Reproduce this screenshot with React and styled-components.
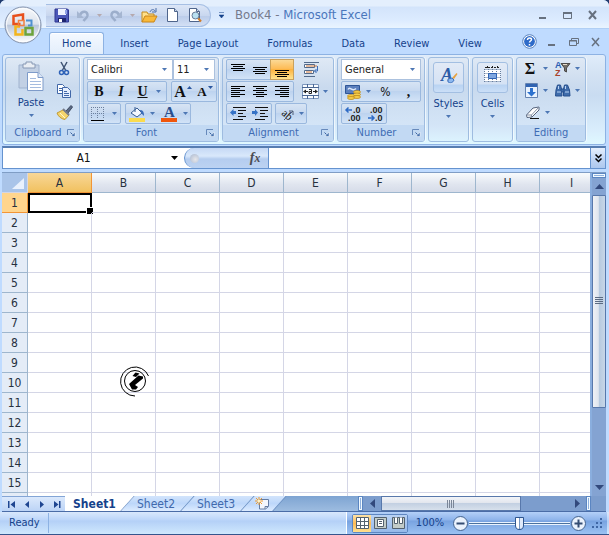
import React, { Fragment } from 'react';
import styled, { createGlobalStyle, css } from 'styled-components';

const GlobalStyle = createGlobalStyle`
  * {
    box-sizing: border-box;
  }

  body {
    margin: 0;
    background: #1f3a6e;
    color: #15428b;
    font: 12px/16px 'DejaVu Sans Condensed', 'Noto Sans', sans-serif;
  }

  button,
  input,
  select {
    margin: 0;
    padding: 0;
    border: 0;
    background: none;
    color: inherit;
    font: inherit;
    outline: none;
  }

  svg {
    display: block;
    flex: none;
  }
`;

const Window = styled.div`
  position: relative;
  display: flex;
  flex-direction: column;
  height: 100vh;
  min-height: 400px;
  overflow: hidden;
  border-radius: 6px 6px 0 0;
  background: #bfdbff;
`;

/* title bar */

const TitleBar = styled.header`
  display: flex;
  align-items: center;
  height: 29px;
  padding: 2px 4px 0 46px;
  border-bottom: 1px solid #b0cff5;
  background: linear-gradient(#e4effd 0, #e4effd 6px, #d3e4fb 7px, #dcebff 20px, #e9f4ff);
`;

const QuickAccess = styled.div`
  display: flex;
  align-items: center;
  width: 165px;
  height: 23px;
  padding-left: 7px;
  border: 1px solid #a6bfe4;
  border-left: 0;
  border-radius: 0 12px 12px 0;
  background: linear-gradient(#dce6f7, #c9d7ef 50%, #bccdea 55%, #d3e0f5);
`;

const IconButton = styled.button`
  display: flex;
  align-items: center;
  justify-content: center;
  flex: none;
  width: ${(props) => props.$w || 22}px;
  height: ${(props) => props.$h || 20}px;
`;

const Title = styled.h1`
  flex: 1;
  margin: 0;
  padding-left: 4px;
  font-size: 13px;
  font-weight: 400;
  white-space: nowrap;
  color: #4a76bb;

  & span {
    color: #757a8c;
  }
`;

const OfficeButton = styled.button`
  position: absolute;
  z-index: 2;
  left: 4px;
  top: 6px;
  width: 38px;
  height: 38px;
`;

/* ribbon */

const TabStrip = styled.nav`
  display: flex;
  align-items: flex-end;
  gap: 3px;
  height: 25px;
  padding: 0 3px 0 49px;
`;

const RibbonTab = styled.button`
  height: 22px;
  padding: 0 12px;
  border: 1px solid transparent;
  border-bottom: 0;
  border-radius: 3px 3px 0 0;
  font-size: 11px;
  white-space: nowrap;

  ${(props) =>
    props.$active &&
    css`
      border-color: #8db2e3;
      background: linear-gradient(#f4f9ff, #e3eefb);
      box-shadow: inset 0 1px #fff;
    `}
`;

const TabTools = styled.div`
  display: flex;
  align-items: center;
  height: 25px;
  margin-left: auto;
`;

const Ribbon = styled.section`
  display: flex;
  gap: 3px;
  height: 91px;
  margin: 0 3px 0 2px;
  padding: 2px;
  border: 1px solid #8db2e3;
  border-radius: 3px;
  background: linear-gradient(#e0ecfa, #d3e2f3 20px, #c9dcf1 40px, #d9edfc 75px, #dff8ff);
`;

const Group = styled.div`
  display: flex;
  flex-direction: column;
  flex: none;
  width: ${(props) => props.$w}px;
  height: 85px;
  border: 1px solid #9ebce0;
  border-radius: 3px;
  overflow: hidden;
  background: linear-gradient(#dfe9f5, #d4e1f1 15px, #c9daee 30px, #d4e5f7 68px, #dcf3fe);
  box-shadow: 1px 0 rgba(255, 255, 255, 0.6);
`;

const GroupBody = styled.div`
  display: flex;
  flex: 1;
  flex-direction: column;
  gap: 1px;
  padding: 1px 3px 0;
`;

const GroupLabel = styled.div`
  display: flex;
  align-items: center;
  height: 16px;
  padding: 0 3px;
  background: #c2d9f3;
  color: #3f6cb3;
  font-size: 11px;

  & span {
    flex: 1;
    text-align: center;
  }
`;

const ToolRow = styled.div`
  display: flex;
  gap: ${(props) => props.$gap || 0}px;
  height: 21px;
`;

const ButtonSet = styled.div`
  display: flex;
  border: 1px solid ${(props) => (props.$bare ? 'transparent' : '#9ab8de')};
  border-radius: 2px;
  background: ${(props) =>
    props.$bare ? 'none' : 'linear-gradient(#d7e4f4, #c7d9f0 45%, #bdd3ef 50%, #d2e3f7)'};
`;

const Tool = styled.button`
  display: flex;
  align-items: center;
  justify-content: center;
  gap: ${(props) => props.$gap || 4}px;
  width: ${(props) => props.$w || 22}px;
  height: 19px;
  color: #111;

  & + & {
    border-left: ${(props) => (props.$plain ? '0' : '1px solid #b9cfeb')};
  }

  ${(props) =>
    props.$active &&
    css`
      background: linear-gradient(#fbd996, #fdbc57 45%, #fcb341 50%, #ffe48f);
      box-shadow: 0 0 0 1px #c9a15c;
    `}
`;

const Letter = styled.span`
  font-family: 'Liberation Serif', serif;
  font-size: ${(props) => props.$size || 14}px;
  font-weight: ${(props) => props.$weight || 700};
  font-style: ${(props) => (props.$italic ? 'italic' : 'normal')};
  text-decoration: ${(props) => (props.$underline ? 'underline' : 'none')};
`;

const SelectBox = styled.label`
  position: relative;
  display: block;
  width: ${(props) => props.$w}px;
  height: 21px;
  border: 1px solid #abc1de;
  background: #fff;
  color: #222;

  & select {
    width: 100%;
    height: 19px;
    padding-left: 3px;
    appearance: none;
    font-size: 11px;
  }

  & svg {
    position: absolute;
    right: 5px;
    top: 8px;
    pointer-events: none;
  }
`;

const ClipboardTools = styled.div`
  display: flex;
  flex: 1;
`;

const BigButton = styled.button`
  display: flex;
  flex-direction: column;
  align-items: center;
  gap: 3px;
  width: ${(props) => props.$w}px;
  padding-top: 2px;
  font-size: 11px;
`;

const CollapsedButton = styled(BigButton)`
  flex: 1;
  width: 100%;
  justify-content: flex-start;
  padding-top: 4px;
`;

const IconPlate = styled.span`
  display: flex;
  justify-content: center;
  width: 31px;
  height: 31px;
  padding-top: 3px;
  border: 1px solid #a3bfe2;
  border-radius: 3px;
  background: linear-gradient(#e2eaf6 0, #d5e2f4 21px, #b9d3f2 22px, #cbdff7);
`;

const Column = styled.div`
  display: flex;
  flex-direction: column;
  gap: 3px;
`;

/* formula bar */

const FormulaBar = styled.div`
  display: flex;
  height: 23px;
  flex: none;
  margin: 1px 3px 3px 2px;
  border: 1px solid #6593cf;
  border-top: 2px solid #567db1;
  background: #fff;
  color: #111;
`;

const NameBox = styled.div`
  display: flex;
  width: 181px;

  & input {
    flex: 1;
    min-width: 0;
    text-align: center;
  }
`;

const FunctionPill = styled.div`
  display: flex;
  align-items: center;
  justify-content: space-between;
  width: 85px;
  padding: 0 5px;
  border-left: 1px solid #6593cf;
  border-right: 1px solid #6593cf;
  border-radius: 10px 0 0 10px;
  background: linear-gradient(#c6d9f5, #d9e8fb 40%, #b5cdef 55%, #bcd2f2);
`;

const Knob = styled.span`
  width: 9px;
  height: 9px;
  border-radius: 50%;
  background: radial-gradient(circle at 60% 60%, #e6e6ea, #a9b8d0);
`;

const FunctionButton = styled(IconButton)`
  color: #4c4c52;
`;

const FormulaInput = styled.input`
  flex: 1;
  min-width: 0;
  padding: 0 4px;
`;

const ExpandButton = styled(IconButton)`
  height: 20px;
  border-left: 1px solid #6593cf;
  background: linear-gradient(#e6f0fd, #c3d8f6 50%, #adc8ee);
`;

/* sheet */

const SheetArea = styled.main`
  position: relative;
  display: flex;
  flex: 1;
  min-height: 0;
  margin: 0 3px 0 2px;
  border-top: 1px solid #7f9dc5;
`;

const GridView = styled.div`
  position: relative;
  flex: 1;
  min-width: 0;
  overflow: hidden;
  background: #fff;
`;

const Grid = styled.table`
  width: 0;
  table-layout: fixed;
  border-collapse: separate;
  border-spacing: 0;

  & col {
    width: 64px;
  }

  & col:first-child {
    width: 26px;
  }

  & th,
  & td {
    height: 20px;
    padding: 0;
    border-right: 1px solid #d4d6e6;
    border-bottom: 1px solid #d4d6e6;
    font-weight: 400;
    line-height: 18px;
  }
`;

const Corner = styled.th`
  background: #a9c4e9;

  & svg {
    margin: 2px 0 0 9px;
  }
`;

const HeaderCell = styled.th`
  color: #27313f;
  background: ${(props) => (props.scope === 'col' ? 'linear-gradient(#f8fbfd, #e0e5ef 60%, #d6dce9)' : '#e4ecf7')};

  && {
    border-color: #9eb6ce;
  }

  ${(props) =>
    props.$active &&
    css`
      background: ${props.scope === 'col' ? 'linear-gradient(#f8d798, #f1c15f)' : '#ffd58d'};

      &&& {
        border-color: #f29536;
      }
    `}
`;

const Cell = styled.td`
  position: relative;
`;

const CellCursor = styled.div`
  position: absolute;
  inset: 0 -1px -1px 0;
  border: 2px solid #000;

  &::after {
    content: '';
    position: absolute;
    right: -3px;
    bottom: -3px;
    width: 6px;
    height: 6px;
    border: 1px solid #fff;
    border-right: 0;
    border-bottom: 0;
    background: #000;
  }
`;

const CanvasMark = styled.svg`
  position: absolute;
  left: 115px;
  top: 191px;
`;

const VerticalScroll = styled.div`
  display: flex;
  flex-direction: column;
  width: 16px;
  border-left: 2px solid #8aaede;
  background: #84a3d2;
`;

const SplitHandle = styled.div`
  width: ${(props) => props.$w}px;
  height: ${(props) => props.$h}px;
  flex: none;
  border: 1px solid #5b86c2;
  background: #8fb0dd;
  box-shadow: inset 0 0 0 1px #f2faff;
`;

const VThumb = styled.div`
  display: flex;
  align-items: center;
  justify-content: center;
  flex: 213;
  border: 1px solid #5878ab;
  border-radius: 1px;
  background: linear-gradient(90deg, #eff1f5, #dfe5ee 45%, #b6c9df 50%, #c8d7e8);
`;

const Spacer = styled.div`
  flex: ${(props) => props.$grow || 1};
`;

/* sheet tabs */

const BottomBar = styled.div`
  display: flex;
  flex: none;
  height: 16px;
  margin: 0 3px 0 2px;
  border-bottom: 1px solid #4a6ca6;
  background: linear-gradient(#7ea4d2, #9dbce0);
`;

const SheetNav = styled.div`
  display: flex;
  width: 63px;
  padding-left: 2px;
  border-top: 1px solid #83a5d6;
  background: linear-gradient(#dbe9fc, #bcd4f6);
`;

const SheetTab = styled.button`
  position: relative;
  z-index: 1;
  width: ${(props) => (props.$active ? 63 : 60)}px;
  height: 15px;
  padding-right: 4px;
  color: ${(props) => (props.$active ? '#15428b' : '#4069ac')};
  font-weight: ${(props) => (props.$active ? 700 : 400)};
  line-height: 14px;

  &::before {
    content: '';
    position: absolute;
    z-index: -1;
    inset: 0;
    transform: skewX(-42deg);
    border-right: 1px solid #6f92c4;
    background: ${(props) => (props.$active ? '#fff' : 'linear-gradient(#d2e4fc, #bdd7fa 50%, #dcebff)')};
  }
`;

const SheetTabs = styled.div`
  display: flex;
  isolation: isolate;
  overflow: hidden;
  padding-right: 8px;
  background: linear-gradient(90deg, #fff 40px, transparent 40px);
`;

const NewSheetTab = styled(SheetTab)`
  display: flex;
  align-items: center;
  justify-content: center;
  width: 32px;
`;

const HorizontalScroll = styled.div`
  display: flex;
  flex: none;
  width: 41%;
  margin-left: auto;
  padding-right: 15px;
  background: #7c9dcd;
`;

const HThumb = styled.div`
  display: flex;
  align-items: center;
  justify-content: center;
  flex: 140;
  border: 1px solid #5878ab;
  background: linear-gradient(#f2f4f8, #e2e6ee 45%, #c3d0e2 50%, #d7e0ec);
`;

/* status bar */

const StatusBar = styled.footer`
  display: flex;
  align-items: center;
  flex: none;
  height: 23px;
  padding-right: 2px;
  border-bottom: 1px solid #35558d;
  background: linear-gradient(#d9e8fc, #bbd5f9 8px, #b4d0f7 9px, #cfe8fd);
  font-size: 11px;
`;

const StatusText = styled.div`
  width: 49px;
  padding-left: 9px;
  border-right: 1px solid #8db2e3;
  line-height: 20px;
`;

const StatusTools = styled.div`
  display: flex;
  align-items: center;
  height: 22px;
  margin-left: auto;
  padding-left: 5px;
  border-left: 1px solid #fff;
  background: linear-gradient(#b4d0f8, #8db3ea 8px, #78a3e0 9px, #9bc2f3);
`;

const ViewSwitch = styled.div`
  display: flex;
  border: 1px solid #5e86c0;
  border-radius: 2px;
`;

const ViewButton = styled(IconButton)`
  background: ${(props) =>
    props.$active ? 'linear-gradient(#fde2a8, #fdbb55 50%, #ffe090)' : 'linear-gradient(#b9d2f4, #96b9ea)'};
`;

const ZoomLabel = styled.button`
  width: 44px;
  text-align: center;
`;

const ZoomSlider = styled.input`
  width: 101px;
  height: 16px;
  appearance: none;
  background: linear-gradient(#49719f, #49719f) center / 100% 1px no-repeat,
    linear-gradient(#e9f3ff, #e9f3ff) center / 100% 3px no-repeat;

  &::-webkit-slider-thumb {
    appearance: none;
    width: 9px;
    height: 13px;
    border: 1px solid #2f568f;
    border-radius: 1px 1px 5px 5px;
    background: linear-gradient(90deg, #fff 3px, #7697c4 3px, #7697c4 4px, #dfeafa 4px);
  }
`;

const Arrow = ({ w = 5, color = '#4d77b4' }) => (
  <svg width={w} height={3} viewBox='0 0 5 3'>
    <path d='M0 0h5L2.500 3z' fill={color} />
  </svg>
);

const Lines = ({ widths, top = 2, align = 'left', step = 2 }) => (
  <svg width='16' height='16' shapeRendering='crispEdges'>
    {widths.map((w, i) => {
      const x = align === 'left' ? 1 : align === 'right' ? 15 - w : 8 - w / 2;
      return <rect key={i} x={x} y={top + i * step} width={w} height='1' fill='#000' />;
    })}
  </svg>
);

const Launcher = () => (
  <svg width='9' height='9' viewBox='0 0 9 9' fill='none' stroke='#6689bb'>
    <path d='M.5 6V.5H7' />
    <path d='M3.500 3.500l3 3' stroke='#3a62a0' />
    <path d='M4 7.500h4V3z' fill='#4470ad' stroke='#fff' strokeWidth='.5' />
  </svg>
);

const OfficeLogo = () => (
  <svg width='38' height='38' viewBox='0 0 38 38'>
    <defs>
      <linearGradient id='orb' x2='0' y2='1'>
        <stop offset='0' stopColor='#f7f9fc' />
        <stop offset='.48' stopColor='#dce2ec' />
        <stop offset='.5' stopColor='#b9c6da' />
        <stop offset='1' stopColor='#fff' />
      </linearGradient>
    </defs>
    <circle cx='19' cy='19' r='18' fill='url(#orb)' stroke='#8291ab' />
    <circle cx='19' cy='19' r='16.500' fill='none' stroke='#fff' opacity='.8' />
    <g fill='none' strokeWidth='2.500'>
      <path d='M16.500 18H9.500V10l9.500-1.500V15' stroke='#e8501c' />
      <path d='M22 14.500h5.500v5H24' stroke='#4f91d0' strokeWidth='2' />
      <path d='M16 20.500h-4.500V28.500h7V23' stroke='#f3b51d' />
      <path d='M21.500 22h7v6.500h-7z' stroke='#6da33b' />
      <path d='M14.500 14.500h5.500v5h-5.500z' stroke='#f1803f' strokeWidth='1.500' />
    </g>
  </svg>
);

const SaveIcon = () => (
  <svg width='15' height='15' viewBox='0 0 15 15'>
    <path d='M1 1h12.500l1 1v12H1z' fill='#4c58b8' stroke='#2e3791' />
    <path d='M4 1h8v6H4z' fill='#eef3ff' />
    <path d='M4 10h8v4H4z' fill='#1e256e' />
    <path d='M5 11h3v3H5z' fill='#fff' />
    <path d='M11 2h2v4h-2z' fill='#8fa0e3' />
  </svg>
);

const UndoIcon = ({ flip }) => (
  <svg width='14' height='13' viewBox='0 0 14 13'>
    <g transform={flip ? 'translate(14 0) scale(-1 1)' : undefined}>
      <path d='M4 6C6 1 12 2 11.500 6.500 11 9 9 10 7.500 12' fill='none' stroke='#9caecb' strokeWidth='2.500' />
      <path d='M1 2v7h7z' fill='#a5b6d1' />
    </g>
  </svg>
);

const OpenIcon = () => (
  <svg width='17' height='15' viewBox='0 0 17 15'>
    <path d='M1 14V4h5l1 2h6v3' fill='#ffe08a' stroke='#c28a1e' />
    <path d='M1 14l3-6h12l-3 6z' fill='#f9b93a' stroke='#c9861b' />
    <path d='M9 4c1-3 4-3 5-1m1-3v4h-4' fill='none' stroke='#4d6fa8' />
  </svg>
);

const PageIcon = ({ lens }) => (
  <svg width='15' height='16' viewBox='0 0 15 16'>
    <path d='M2.500 1.500h7l3 3v10h-10z' fill='#fff' stroke='#4f658c' />
    <path d='M9.500 1.500v3h3' fill='#c8d6ea' stroke='#4f658c' />
    {lens && (
      <Fragment>
        <path d='M11 11l3 3.500' stroke='#d07d2b' strokeWidth='2' />
        <circle cx='8.500' cy='8.500' r='3.500' fill='#b9e0f1' stroke='#687b96' />
      </Fragment>
    )}
  </svg>
);

const PasteIcon = () => (
  <svg width='27' height='31' viewBox='0 0 27 31'>
    <path d='M1 4h20v23H1z' fill='#c2d0e4' stroke='#a0b3cf' />
    <path d='M5 3h3V1h6v2h3v4H5z' fill='#e9edf3' stroke='#8798b4' />
    <path d='M9.500 11.500H20l5 5v13H9.500z' fill='#fff' stroke='#7e9bc9' />
    <path d='M20 11.500v5h5' fill='#dce7f6' stroke='#7e9bc9' />
    <path d='M12 17.500h6m-6 3h11m-11 3h11m-11 3h11' stroke='#a5bcdf' />
  </svg>
);

const CutIcon = () => (
  <svg width='12' height='15' viewBox='0 0 12 15' fill='none'>
    <path d='M3 1l5 9M9 1L4 10' stroke='#3f5373' strokeWidth='1.500' />
    <circle cx='3.500' cy='11.500' r='2' stroke='#2e62b8' strokeWidth='1.500' />
    <circle cx='8.500' cy='11.500' r='2' stroke='#2e62b8' strokeWidth='1.500' />
  </svg>
);

const CopyIcon = () => (
  <svg width='16' height='14' viewBox='0 0 16 14' stroke='#4167a8'>
    <path d='M1.500.5h5l2 2v7h-7z' fill='#fff' />
    <path d='M3 4.500h4M3 6.500h4' />
    <path d='M6.500 3.500h5l3 3v7h-8z' fill='#e6efff' />
    <path d='M8 7.500h3m-3 2h5m-5 2h5' />
  </svg>
);

const PainterIcon = () => (
  <svg width='17' height='15' viewBox='0 0 17 15'>
    <path d='M10 6l5-5.500 1.500 1.500L12 8z' fill='#5c6b85' stroke='#3e4960' />
    <path d='M1 8l6-3 6 5-4 4.500C5 14 2 11 1 8z' fill='#f5d56c' stroke='#c09a35' />
    <path d='M7 4l6 6' stroke='#777c8c' strokeWidth='2' />
    <path d='M4 8l5 5' stroke='#fff6cf' />
  </svg>
);

const BorderIcon = () => (
  <svg width='14' height='14' viewBox='0 0 14 14' stroke='#6c7f9c' strokeDasharray='1 1'>
    <path d='M0 .5h13M0 6.500h13M.5 0v12M6.500 0v12M12.500 0v12' fill='none' />
    <path d='M0 13.500h13' stroke='#000' strokeDasharray='none' />
  </svg>
);

const FillIcon = () => (
  <svg width='17' height='16' viewBox='0 0 17 16'>
    <path d='M2 7l6-5 5 5-5 4z' fill='#f4f8ff' stroke='#365c93' />
    <path d='M6 1v5' stroke='#365c93' />
    <path d='M11 4c3 0 4 2 4 6l-3-3z' fill='#3a6cb8' />
    <path d='M0 12h16v4H0z' fill='#fadb4f' />
  </svg>
);

const WrapIcon = () => (
  <svg width='17' height='15' viewBox='0 0 17 15' fill='none'>
    <path d='M1 .5h15M1 14.500h11' stroke='#536a8b' />
    <path d='M1.500 2.500h10v3h-10zM1.500 8.500h9v3h-9z' fill='#fff' stroke='#536a8b' />
    <path d='M3 4h11M3 10h6' stroke='#c9743a' />
    <path d='M14.500 4v5h-3m2-2l-2 2 2 2' stroke='#3b6cba' />
  </svg>
);

const MergeIcon = () => (
  <svg width='17' height='15' viewBox='0 0 17 15'>
    <path d='M.5.5h16v14H.5z' fill='#f8fbff' stroke='#7d97be' />
    <path d='M0 3.500h17M0 11.500h17M5.500 0v3M11.500 0v3M5.500 12v3M11.500 12v3' stroke='#4a6794' />
    <path d='M1 7.500l3-2v4zM16 7.500l-3-2v4zM4 7h2v1H4zM11 7h2v1h-2z' fill='#222' />
    <path d='M7 5.500h2.500v4H7v-2h2.500' fill='none' stroke='#222' />
  </svg>
);

const IndentIcon = ({ right }) => (
  <svg width='17' height='15' viewBox='0 0 17 15'>
    <path d='M3 1.500h13M8 4.500h8M8 7.500h5M8 10.500h8M3 13.500h10' stroke='#111' />
    <path d={right ? 'M6 6.500L3 3v2H0v3h3v2z' : 'M0 6.500L3.500 3v2H6v3H3.500v2z'} fill='#3572c6' />
  </svg>
);

const OrientationIcon = () => (
  <svg width='16' height='15' viewBox='0 0 16 15'>
    <text x='2' y='8' fontFamily='Liberation Serif, serif' fontSize='11' fill='#111' transform='rotate(42 2 8)'>
      ab
    </text>
    <path d='M5 14L14 5m0 4V5h-4' fill='none' stroke='#4f5f79' />
  </svg>
);

const MoneyIcon = () => (
  <svg width='17' height='16' viewBox='0 0 17 16'>
    <path d='M.5 1.500h14v8H.5z' fill='#5b7fbd' stroke='#2e5596' />
    <path d='M3 5.500c2-4 4 3 8-1' stroke='#dce8fa' fill='none' strokeWidth='1.500' />
    <g fill='#f8cf4b' stroke='#b98418' strokeWidth='.7'>
      <ellipse cx='12' cy='8' rx='3.500' ry='1.500' />
      <ellipse cx='12' cy='10.500' rx='3.500' ry='1.500' />
      <ellipse cx='6' cy='12' rx='3.500' ry='1.500' />
      <ellipse cx='12' cy='13' rx='3.500' ry='1.500' />
      <ellipse cx='6' cy='14' rx='3.500' ry='1.500' />
    </g>
  </svg>
);

const DecimalIcon = ({ up }) => (
  <svg width='18' height='16' viewBox='0 0 18 16'>
    <g fontFamily='Liberation Sans, sans-serif' fontSize='9' fontWeight='700' fill='#222'>
      <text x={up ? 9 : 4} y='7'>
        {up ? '.0' : '.00'}
      </text>
      <text x={up ? 4 : 9} y='15'>
        {up ? '.00' : '.0'}
      </text>
    </g>
    <path d={up ? 'M2 4h6M4.500 1.500L2 4l2.500 2.500' : 'M2 12h6M5.500 9.500L8 12l-2.500 2.500'} fill='none' stroke='#2f6cc6' strokeWidth='1.500' />
  </svg>
);

const StylesIcon = () => (
  <svg width='18' height='18' viewBox='0 0 18 18'>
    <text x='1' y='15' fontFamily='Liberation Serif, serif' fontSize='18' fontStyle='italic' fontWeight='700' fill='#2c5ba6'>
      A
    </text>
    <path d='M12 12l4.500-5 1 1-3.500 5z' fill='#e7a23e' />
    <path d='M8 13l4-1 2 2c-1 3-4 3-6 2z' fill='#8db8ee' stroke='#3c73c0' />
  </svg>
);

const CellsIcon = () => (
  <svg width='17' height='17' viewBox='0 0 17 17' fill='none'>
    <path d='M.5 3.500h16v12H.5z' fill='#fff' />
    <path d='M.5 3.500h16M.5 7.500h16M.5 11.500h16M.5 15.500h16M.5 3v13M4.500 3v13M8.500 3v13M12.500 3v13M16.500 3v13' stroke='#647c9f' strokeDasharray='1 1' />
    <path d='M4.500 7.500h8v5h-8z' fill='#7fa7e0' stroke='#2e62b3' />
    <path d='M1 1.500h15M3.500 0v3M8.500 0v3M13.500 0v3' stroke='#222' strokeDasharray='2 1' />
  </svg>
);

const FillDownIcon = () => (
  <svg width='14' height='15' viewBox='0 0 14 15'>
    <path d='M.5.5h12v14H.5z' fill='#e9f3ff' stroke='#6483b2' />
    <path d='M1 1h11v3H1z' fill='#3164b2' />
    <path d='M5 5h3v4h3l-4.500 4.500L2 9h3z' fill='#2d72cf' />
  </svg>
);

const EraserIcon = () => (
  <svg width='16' height='13' viewBox='0 0 16 13'>
    <path d='M1.500 9L8 2l6-1v3L7 11l-5 .5z' fill='#fff' stroke='#56647d' />
    <path d='M1.500 9h5L14 1M6.500 9v2.500' fill='none' stroke='#8390a6' />
    <path d='M5 12.500h9' stroke='#111' />
  </svg>
);

const SortIcon = () => (
  <svg width='17' height='16' viewBox='0 0 17 16'>
    <g fontFamily='Liberation Sans, sans-serif' fontSize='9' fontWeight='700'>
      <text x='1' y='7' fill='#2c60b3'>
        A
      </text>
      <text x='1' y='15' fill='#a9432e'>
        Z
      </text>
    </g>
    <path d='M7 2.500h9L12.500 7v4l-2-1V7z' fill='#74706a' stroke='#4c4b4b' />
    <path d='M9 3.500h4' stroke='#e5dccb' />
  </svg>
);

const FindIcon = () => (
  <svg width='17' height='14' viewBox='0 0 17 14' fill='#3f6cab' stroke='#27508f'>
    <path d='M3.500 1h3l1 4 .5 7H1.500l.5-6zM10.500 1h3l2 5 .5 6H9.500V5z' />
    <path d='M7 5h3v3H7z' />
    <path d='M3 8h4M11 8h4M4.500 2v3M11.500 2v3' stroke='#b9d3f5' />
  </svg>
);

const WindowIcon = ({ kind, big }) => (
  <svg width='11' height='10' viewBox='0 0 11 10' fill='none' stroke='#67717f' strokeWidth='1.500'>
    {kind === 'min' && <path d='M2 8h7' strokeWidth='2' />}
    {kind === 'close' && <path d='M2 1l7 8M9 1L2 9' strokeWidth={big ? 2 : 1.5} />}
    {kind === 'max' && (
      <Fragment>
        <path d='M1.500 2.500h8v6h-8z' strokeWidth='1' />
        <path d='M1 3h9' strokeWidth='2' />
      </Fragment>
    )}
    {kind === 'restore' && (
      <g strokeWidth='1'>
        <path d='M3.500 3V1.500h7v5H9' />
        <path d='M1.500 3.500h7v5h-7zM1 4h8' />
      </g>
    )}
  </svg>
);

const HelpIcon = () => (
  <svg width='15' height='15' viewBox='0 0 15 15'>
    <circle cx='7.500' cy='7.500' r='6.800' fill='#fff' stroke='#5780bc' />
    <circle cx='7.500' cy='7.500' r='5.400' fill='#2e6bc9' />
    <path d='M5.500 6c0-3 4-2.500 4-.5 0 1.500-2 1.500-2 3M7.500 10v1.500' fill='none' stroke='#fff' strokeWidth='1.500' />
  </svg>
);

const NavIcon = ({ d }) => (
  <svg width='8' height='7' viewBox='0 0 8 7'>
    <path d={d} fill='#1f4691' />
  </svg>
);

const NewSheetIcon = () => (
  <svg width='15' height='13' viewBox='0 0 15 13'>
    <path d='M4.500 2.500h9v7l-3 2.500h-6z' fill='#f4f7fd' stroke='#647ca3' />
    <path d='M13 9.500h-3V12' fill='none' stroke='#647ca3' />
    <path d='M4 0v8M0 4h8M1 1l6 6M7 1L1 7' stroke='#ee9a2e' />
    <circle cx='4' cy='4' r='1.500' fill='#fff3c4' />
  </svg>
);

const ViewIcon = ({ kind }) => (
  <svg width='13' height='13' viewBox='0 0 13 13' fill='#fff' stroke='#53616e'>
    <path d='M.5.5h12v11H.5z' fill={kind === 'normal' ? '#fff' : '#c3ccc8'} />
    {kind === 'normal' && <path d='M0 4.500h13M0 8.500h13M4.500 0v12M8.500 0v12' />}
    {kind === 'layout' && <path d='M3.500 2.500h6v7h-6zM5 4.500h3M5 6.500h3' />}
    {kind === 'break' && <path d='M2.500.5v6h3v-6M7.500.5v6h3v-6' />}
  </svg>
);

const ZoomIcon = ({ plus }) => (
  <svg width='17' height='17' viewBox='0 0 17 17'>
    <circle cx='8.500' cy='8.500' r='7' fill='#eaf2fd' stroke='#43638f' />
    <path d='M4.500 8.500h8' stroke='#344d73' strokeWidth='2' />
    {plus && <path d='M8.500 4.500v8' stroke='#344d73' strokeWidth='2' />}
  </svg>
);

const tabs = ['Home', 'Insert', 'Page Layout', 'Formulas', 'Data', 'Review', 'View'];
const columns = 'ABCDEFGHIJKLMNOPQRSTUVWXYZ'.split('');
const rows = Array.from({ length: 40 }, (_, i) => i + 1);

const RibbonGroup = ({ label, width, launcher, children }) => (
  <Group $w={width}>
    <GroupBody>{children}</GroupBody>
    <GroupLabel>
      <span>{label}</span>
      {launcher && <Launcher />}
    </GroupLabel>
  </Group>
);

const Dropdown = ({ label, value, width }) => (
  <SelectBox $w={width}>
    <select aria-label={label} defaultValue={value}>
      <option>{value}</option>
    </select>
    <Arrow />
  </SelectBox>
);

const ClipboardGroup = () => (
  <RibbonGroup label='Clipboard' width={75} launcher>
    <ClipboardTools>
      <BigButton $w={44}>
        <PasteIcon />
        Paste
        <Arrow />
      </BigButton>
      <Column>
        <Tool $plain aria-label='Cut'>
          <CutIcon />
        </Tool>
        <Tool $plain aria-label='Copy'>
          <CopyIcon />
        </Tool>
        <Tool $plain aria-label='Format Painter'>
          <PainterIcon />
        </Tool>
      </Column>
    </ClipboardTools>
  </RibbonGroup>
);

const FontGroup = () => (
  <RibbonGroup label='Font' width={136} launcher>
    <ToolRow>
      <Dropdown label='Font' value='Calibri' width={86} />
      <Dropdown label='Font size' value='11' width={42} />
    </ToolRow>
    <ToolRow $gap={4}>
      <ButtonSet>
        <Tool>
          <Letter>B</Letter>
        </Tool>
        <Tool>
          <Letter $italic>I</Letter>
        </Tool>
        <Tool $w={34} $gap={8}>
          <Letter $underline>U</Letter>
          <Arrow />
        </Tool>
      </ButtonSet>
      <ButtonSet>
        <Tool $gap={1} aria-label='Grow font'>
          <Letter $size={16}>A</Letter>
          <svg width='5' height='12' viewBox='0 0 5 12'>
            <path d='M0 3h5L2.500 0z' fill='#2b57a0' />
          </svg>
        </Tool>
        <Tool $gap={1} aria-label='Shrink font'>
          <Letter $size={13}>A</Letter>
          <svg width='5' height='12' viewBox='0 0 5 12'>
            <path d='M0 0h5L2.500 3z' fill='#2b57a0' />
          </svg>
        </Tool>
      </ButtonSet>
    </ToolRow>
    <ToolRow $gap={4}>
      <ButtonSet>
        <Tool $w={32} $gap={7} aria-label='Borders'>
          <BorderIcon />
          <Arrow />
        </Tool>
      </ButtonSet>
      <ButtonSet>
        <Tool $w={32} aria-label='Fill colour'>
          <FillIcon />
          <Arrow />
        </Tool>
        <Tool $w={32} $gap={6} aria-label='Font colour'>
          <svg width='16' height='16' viewBox='0 0 16 16'>
            <text x='3' y='11' fontFamily='Liberation Serif, serif' fontSize='15' fontWeight='700' fill='#2a4e8c'>
              A
            </text>
            <path d='M0 12h16v4H0z' fill='#f0560c' />
          </svg>
          <Arrow />
        </Tool>
      </ButtonSet>
    </ToolRow>
  </RibbonGroup>
);

const AlignmentGroup = () => (
  <RibbonGroup label='Alignment' width={112} launcher>
    <ToolRow $gap={5}>
      <ButtonSet>
        <Tool aria-label='Top align'>
          <Lines widths={[14, 10, 14, 10]} top={2} align='center' />
        </Tool>
        <Tool aria-label='Middle align'>
          <Lines widths={[14, 10, 14, 10]} top={5} align='center' />
        </Tool>
        <Tool $active aria-label='Bottom align'>
          <Lines widths={[14, 10, 14, 10]} top={8} align='center' />
        </Tool>
      </ButtonSet>
      <ButtonSet $bare>
        <Tool aria-label='Wrap text'>
          <WrapIcon />
        </Tool>
      </ButtonSet>
    </ToolRow>
    <ToolRow $gap={5}>
      <ButtonSet>
        <Tool aria-label='Align left'>
          <Lines widths={[14, 9, 14, 9, 14, 9]} align='left' />
        </Tool>
        <Tool aria-label='Centre'>
          <Lines widths={[14, 8, 14, 8, 14, 8]} align='center' />
        </Tool>
        <Tool aria-label='Align right'>
          <Lines widths={[14, 9, 14, 9, 14, 9]} align='right' />
        </Tool>
      </ButtonSet>
      <ButtonSet $bare>
        <Tool $w={30} aria-label='Merge and centre'>
          <MergeIcon />
          <Arrow />
        </Tool>
      </ButtonSet>
    </ToolRow>
    <ToolRow $gap={3}>
      <ButtonSet>
        <Tool aria-label='Decrease indent'>
          <IndentIcon />
        </Tool>
        <Tool aria-label='Increase indent'>
          <IndentIcon right />
        </Tool>
      </ButtonSet>
      <ButtonSet>
        <Tool $w={30} aria-label='Orientation'>
          <OrientationIcon />
          <Arrow />
        </Tool>
      </ButtonSet>
    </ToolRow>
  </RibbonGroup>
);

const NumberGroup = () => (
  <RibbonGroup label='Number' width={88} launcher>
    <Dropdown label='Number format' value='General' width={80} />
    <ToolRow>
      <ButtonSet>
        <Tool $w={32} aria-label='Accounting format'>
          <MoneyIcon />
          <Arrow />
        </Tool>
        <Tool $w={23}>%</Tool>
        <Tool $w={23}>
          <Letter>,</Letter>
        </Tool>
      </ButtonSet>
    </ToolRow>
    <ToolRow>
      <ButtonSet>
        <Tool aria-label='Increase decimal'>
          <DecimalIcon up />
        </Tool>
        <Tool aria-label='Decrease decimal'>
          <DecimalIcon />
        </Tool>
      </ButtonSet>
    </ToolRow>
  </RibbonGroup>
);

const CollapsedGroup = ({ label, icon }) => (
  <Group $w={41}>
    <CollapsedButton>
      <IconPlate>{icon}</IconPlate>
      {label}
      <Arrow />
    </CollapsedButton>
  </Group>
);

const EditingGroup = () => (
  <RibbonGroup label='Editing' width={70}>
    <ToolRow>
      <Tool $w={34} $plain $gap={8} aria-label='Sum'>
        <Letter $size={16}>Σ</Letter>
        <Arrow />
      </Tool>
      <Tool $w={30} $plain aria-label='Sort and filter'>
        <SortIcon />
        <Arrow />
      </Tool>
    </ToolRow>
    <ToolRow>
      <Tool $w={34} $plain aria-label='Fill'>
        <FillDownIcon />
        <Arrow />
      </Tool>
      <Tool $w={30} $plain aria-label='Find and select'>
        <FindIcon />
        <Arrow />
      </Tool>
    </ToolRow>
    <ToolRow>
      <Tool $w={34} $plain aria-label='Clear'>
        <EraserIcon />
        <Arrow />
      </Tool>
    </ToolRow>
  </RibbonGroup>
);

const Sheet = () => (
  <SheetArea>
    <GridView>
      <Grid>
        <colgroup>
          <col />
          {columns.map((c) => (
            <col key={c} />
          ))}
        </colgroup>
        <thead>
          <tr>
            <Corner>
              <svg width='14' height='13' viewBox='0 0 14 13'>
                <path d='M13 1v11H1z' fill='#e9f1fd' />
              </svg>
            </Corner>
            {columns.map((c) => (
              <HeaderCell key={c} scope='col' $active={c === 'A'}>
                {c}
              </HeaderCell>
            ))}
          </tr>
        </thead>
        <tbody>
          {rows.map((r) => (
            <tr key={r}>
              <HeaderCell scope='row' $active={r === 1}>
                {r}
              </HeaderCell>
              {columns.map((c) => (
                <Cell key={c}>{r === 1 && c === 'A' && <CellCursor />}</Cell>
              ))}
            </tr>
          ))}
        </tbody>
      </Grid>
      <CanvasMark width='34' height='34' viewBox='0 0 34 34' fill='none' stroke='#000'>
        <path d='M18 32A14.500 14.500 0 1 1 31.500 12' />
        <circle cx='18' cy='17' r='10.500' fill='#fff' />
        <path d='M12 20L21.500 11.500l4.500 1v2L18 21l3 2-2 2.500h-4z' fill='#000' stroke='none' />
        <path d='M15.500 12l3-3.500 4 1-3.500 3.500z' fill='#000' stroke='none' />
      </CanvasMark>
    </GridView>
    <VerticalScroll>
      <SplitHandle $w={14} $h={5} />
      <IconButton $w={14} $h={17} aria-label='Scroll up'>
        <svg width='9' height='5'>
          <path d='M0 5h9L4.500 0z' fill='#32497c' />
        </svg>
      </IconButton>
      <VThumb>
        <svg width='8' height='8' shapeRendering='crispEdges'>
          <path d='M0 .5h8M0 2.500h8M0 4.500h8M0 6.500h8' stroke='#5c6b82' />
        </svg>
      </VThumb>
      <Spacer $grow={72} />
      <IconButton $w={14} $h={17} aria-label='Scroll down'>
        <svg width='9' height='5'>
          <path d='M0 0h9L4.500 5z' fill='#32497c' />
        </svg>
      </IconButton>
    </VerticalScroll>
  </SheetArea>
);

const App = () => (
  <Fragment>
    <GlobalStyle />
    <Window>
      <OfficeButton aria-label='Office'>
        <OfficeLogo />
      </OfficeButton>
      <TitleBar>
        <QuickAccess>
          <IconButton $w={16} aria-label='Save'>
            <SaveIcon />
          </IconButton>
          <IconButton $w={28} aria-label='Undo'>
            <UndoIcon />
          </IconButton>
          <Arrow color='#b5a9ae' />
          <IconButton $w={28} aria-label='Redo'>
            <UndoIcon flip />
          </IconButton>
          <Arrow color='#b5a9ae' />
          <IconButton $w={28} aria-label='Open'>
            <OpenIcon />
          </IconButton>
          <IconButton $w={18} aria-label='New'>
            <PageIcon />
          </IconButton>
          <IconButton $w={26} aria-label='Print preview'>
            <PageIcon lens />
          </IconButton>
        </QuickAccess>
        <IconButton $w={20} aria-label='Customise toolbar'>
          <svg width='5' height='7' viewBox='0 0 5 7'>
            <path d='M0 .5h5M0 3h5L2.500 6z' fill='#15428b' stroke='#15428b' strokeWidth='.5' />
          </svg>
        </IconButton>
        <Title>
          <span>Book4 -</span> Microsoft Excel
        </Title>
        <IconButton $w={25} aria-label='Minimise'>
          <WindowIcon kind='min' />
        </IconButton>
        <IconButton $w={25} aria-label='Maximise'>
          <WindowIcon kind='max' />
        </IconButton>
        <IconButton $w={25} aria-label='Close'>
          <WindowIcon kind='close' big />
        </IconButton>
      </TitleBar>
      <TabStrip>
        {tabs.map((t) => (
          <RibbonTab key={t} $active={t === 'Home'}>
            {t}
          </RibbonTab>
        ))}
        <TabTools>
          <IconButton aria-label='Help'>
            <HelpIcon />
          </IconButton>
          <IconButton aria-label='Minimise workbook'>
            <WindowIcon kind='min' />
          </IconButton>
          <IconButton aria-label='Restore workbook'>
            <WindowIcon kind='restore' />
          </IconButton>
          <IconButton aria-label='Close workbook'>
            <WindowIcon kind='close' />
          </IconButton>
        </TabTools>
      </TabStrip>
      <Ribbon>
        <ClipboardGroup />
        <FontGroup />
        <AlignmentGroup />
        <NumberGroup />
        <CollapsedGroup label='Styles' icon={<StylesIcon />} />
        <CollapsedGroup label='Cells' icon={<CellsIcon />} />
        <EditingGroup />
      </Ribbon>
      <FormulaBar>
        <NameBox>
          <input aria-label='Name box' defaultValue='A1' />
          <IconButton $w={20} aria-label='Open name list'>
            <svg width='7' height='4'>
              <path d='M0 0h7L3.500 4z' fill='#000' />
            </svg>
          </IconButton>
        </NameBox>
        <FunctionPill>
          <Knob />
          <FunctionButton $w={16} aria-label='Insert function'>
            <Letter $italic>
              f<small>x</small>
            </Letter>
          </FunctionButton>
        </FunctionPill>
        <FormulaInput aria-label='Formula' />
        <ExpandButton $w={15} aria-label='Expand formula bar'>
          <svg width='7' height='9' viewBox='0 0 7 9' fill='none' stroke='#000' strokeWidth='1.500'>
            <path d='M.5.5l3 3 3-3M.5 4.500l3 3 3-3' />
          </svg>
        </ExpandButton>
      </FormulaBar>
      <Sheet />
      <BottomBar>
        <SheetNav>
          <IconButton $w={15} $h={14} aria-label='First sheet'>
            <NavIcon d='M0 0h1.500v7H0zM7 0v7L2.500 3.500z' />
          </IconButton>
          <IconButton $w={15} $h={14} aria-label='Previous sheet'>
            <NavIcon d='M6 0v7L2 3.500z' />
          </IconButton>
          <IconButton $w={15} $h={14} aria-label='Next sheet'>
            <NavIcon d='M2 0v7l4-3.500z' />
          </IconButton>
          <IconButton $w={15} $h={14} aria-label='Last sheet'>
            <NavIcon d='M6 0h1.500v7H6zM1 0v7l4.500-3.500z' />
          </IconButton>
        </SheetNav>
        <SheetTabs>
          <SheetTab $active>Sheet1</SheetTab>
          <SheetTab>Sheet2</SheetTab>
          <SheetTab>Sheet3</SheetTab>
          <NewSheetTab aria-label='Insert worksheet'>
            <NewSheetIcon />
          </NewSheetTab>
        </SheetTabs>
        <HorizontalScroll>
          <SplitHandle $w={5} $h={15} />
          <IconButton $w={18} $h={15} aria-label='Scroll left'>
            <svg width='5' height='9'>
              <path d='M5 0v9L0 4.500z' fill='#32497c' />
            </svg>
          </IconButton>
          <HThumb>
            <svg width='8' height='8' shapeRendering='crispEdges'>
              <path d='M.5 0v8M2.500 0v8M4.500 0v8M6.500 0v8' stroke='#7b8697' />
            </svg>
          </HThumb>
          <Spacer $grow={48} />
          <IconButton $w={18} $h={15} aria-label='Scroll right'>
            <svg width='5' height='9'>
              <path d='M0 0v9l5-4.500z' fill='#32497c' />
            </svg>
          </IconButton>
          <SplitHandle $w={5} $h={15} />
        </HorizontalScroll>
      </BottomBar>
      <StatusBar>
        <StatusText>Ready</StatusText>
        <StatusTools>
          <ViewSwitch>
            <ViewButton $w={18} $h={17} $active aria-label='Normal view'>
              <ViewIcon kind='normal' />
            </ViewButton>
            <ViewButton $w={18} $h={17} aria-label='Page layout view'>
              <ViewIcon kind='layout' />
            </ViewButton>
            <ViewButton $w={18} $h={17} aria-label='Page break preview'>
              <ViewIcon kind='break' />
            </ViewButton>
          </ViewSwitch>
          <ZoomLabel>100%</ZoomLabel>
          <IconButton $w={17} aria-label='Zoom out'>
            <ZoomIcon />
          </IconButton>
          <ZoomSlider type='range' aria-label='Zoom' min='0' max='200' defaultValue='100' />
          <IconButton $w={17} aria-label='Zoom in'>
            <ZoomIcon plus />
          </IconButton>
          <IconButton as='span' $w={20}>
            <svg width='11' height='11' fill='#3f67a5'>
              <path d='M8 0h2v2H8zM4 4h2v2H4zM8 4h2v2H8zM0 8h2v2H0zM4 8h2v2H4zM8 8h2v2H8z' />
            </svg>
          </IconButton>
        </StatusTools>
      </StatusBar>
    </Window>
  </Fragment>
);

export default App;
